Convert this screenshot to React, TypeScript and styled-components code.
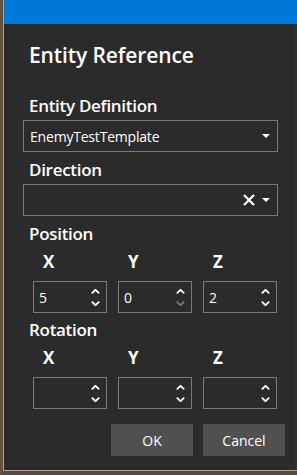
import React from "react";
import styled, { createGlobalStyle } from "styled-components";

const Global = createGlobalStyle`
  html, body {
    margin: 0;
    padding: 0;
    width: 297px;
    height: 475px;
    overflow: hidden;
    background: #5e4e3e;
    font-family: "Open Sans", "Noto Sans", sans-serif;
  }
  #root { height: 475px; }
`;

const Page = styled.div`
  display: flex;
  height: 475px;
  padding-left: 3px;
  box-sizing: border-box;
  background: linear-gradient(90deg, #5a4a3a 0, #6a5a48 2px, #5a4a3a 3px);
`;

const Dialog = styled.div`
  flex: 1;
  height: 471px;
  box-sizing: border-box;
  display: flex;
  flex-direction: column;
  background: #2b2b2b;
  border-left: 1px solid #a3a3a3;
  border-bottom: 1px solid #a3a3a3;
`;

const TitleBar = styled.div`
  height: 24px;
  background: #0078d7;
  flex-shrink: 0;
`;

const Body = styled.div`
  flex: 1;
  display: flex;
  flex-direction: column;
  padding: 0 17px 0 19px;
  border-right: 2px solid #323232;
  color: #ffffff;
`;

const Title = styled.h1`
  margin: 17px 0 0 6px;
  font-size: 21px;
  line-height: 28px;
  font-weight: 600;
  letter-spacing: -0.1px;
`;

const Label = styled.div<{ $top: number }>`
  margin: ${(p) => p.$top}px 0 0 6px;
  font-size: 17px;
  line-height: 22px;
  font-weight: 600;
  letter-spacing: -0.3px;
`;

const Combo = styled.div`
  margin-top: 3px;
  height: 32px;
  box-sizing: border-box;
  border: 1px solid #7a7a7a;
  display: flex;
  align-items: center;
  padding: 0 7px 0 6px;
  gap: 7px;
  font-size: 14px;
  letter-spacing: -0.2px;
`;

const ComboText = styled.span`
  flex: 1;
`;

const AxisGrid = styled.div`
  display: grid;
  grid-template-columns: repeat(3, 74px);
  column-gap: 11px;
  margin-left: 10px;
`;

const Axis = styled.div<{ $top: number }>`
  margin: ${(p) => p.$top}px 0 8px;
  padding-left: 10px;
  font-size: 17px;
  line-height: 22px;
  font-weight: 700;
`;

const Spin = styled.div`
  height: 32px;
  box-sizing: border-box;
  border: 1px solid #7a7a7a;
  display: flex;
  align-items: center;
  padding: 0 6px 0 5px;
  font-size: 14px;
`;

const SpinValue = styled.span`
  flex: 1;
`;

const Arrows = styled.div`
  display: flex;
  flex-direction: column;
  gap: 7px;
`;

const Buttons = styled.div`
  display: flex;
  justify-content: flex-end;
  gap: 10px;
  margin: 15px -7px 0 0;
`;

const Button = styled.div`
  width: 82px;
  height: 32px;
  background: #505050;
  display: flex;
  align-items: center;
  justify-content: center;
  font-size: 14px;
  color: #fff;
`;

const Caret = () => (
  <svg width="8" height="4" viewBox="0 0 8 4">
    <path d="M0 0 H8 L4 4 Z" fill="#fff" />
  </svg>
);

const Clear = () => (
  <svg width="12" height="12" viewBox="0 0 12 12">
    <path d="M1 1 L11 11 M11 1 L1 11" stroke="#fff" strokeWidth="2.2" />
  </svg>
);

const Chevron = ({ up, color = "#fff" }: { up?: boolean; color?: string }) => (
  <svg width="9" height="5" viewBox="0 0 9 5">
    <path
      d={up ? "M0.8 4.3 L4.5 0.8 L8.2 4.3" : "M0.8 0.7 L4.5 4.2 L8.2 0.7"}
      stroke={color}
      strokeWidth="1.8"
      fill="none"
    />
  </svg>
);

const SpinBox = ({ value, downDisabled }: { value?: string; downDisabled?: boolean }) => (
  <Spin>
    <SpinValue>{value ?? ""}</SpinValue>
    <Arrows>
      <Chevron up />
      <Chevron color={downDisabled ? "#7a7a7a" : "#fff"} />
    </Arrows>
  </Spin>
);

const Vector = ({ values, top }: { values: (string | undefined)[]; top: number }) => (
  <AxisGrid>
    {["X", "Y", "Z"].map((a) => (
      <Axis key={a} $top={top}>
        {a}
      </Axis>
    ))}
    {values.map((v, i) => (
      <SpinBox key={i} value={v} downDisabled={v === "0"} />
    ))}
  </AxisGrid>
);

export default function App() {
  return (
    <>
      <Global />
      <Page>
        <Dialog>
          <TitleBar />
          <Body>
            <Title>Entity Reference</Title>
            <Label $top={26}>Entity Definition</Label>
            <Combo>
              <ComboText>EnemyTestTemplate</ComboText>
              <Caret />
            </Combo>
            <Label $top={7}>Direction</Label>
            <Combo>
              <ComboText />
              <Clear />
              <Caret />
            </Combo>
            <Label $top={7}>Position</Label>
            <Vector values={["5", "0", "2"]} top={6} />
            <Label $top={6}>Rotation</Label>
            <Vector values={[undefined, undefined, undefined]} top={6} />
            <Buttons>
              <Button>OK</Button>
              <Button>Cancel</Button>
            </Buttons>
          </Body>
        </Dialog>
      </Page>
    </>
  );
}
